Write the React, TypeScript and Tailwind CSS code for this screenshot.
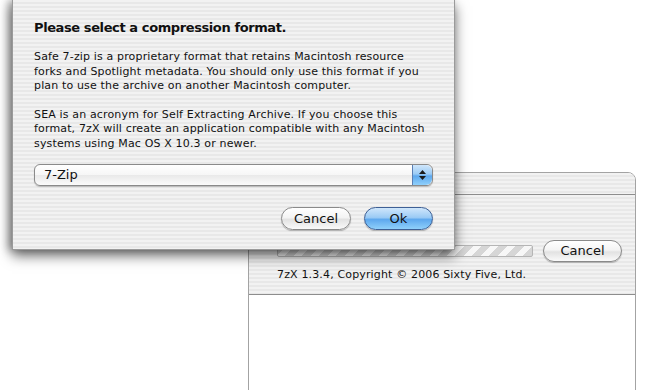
import React from "react";

const stripes =
  "bg-[repeating-linear-gradient(180deg,#f2f2f2_0px,#f2f2f2_2px,#e8e8e8_2px,#e8e8e8_4px)]";
const font = "font-['DejaVu_Sans',sans-serif]";

function AquaButton({ label, blue, className = "" }: { label: string; blue?: boolean; className?: string }) {
  return (
    <div
      className={
        "flex h-[22px] items-center justify-center rounded-full border text-[13px] text-[#111] shadow-[0_1px_1px_rgba(0,0,0,0.25)] " +
        (blue
          ? "border-[#3d5f95] bg-[linear-gradient(180deg,#cfe6fb_0%,#9bcbf5_45%,#5ea8ee_55%,#8fd0fb_100%)] "
          : "border-[#8a8a8a] bg-[linear-gradient(180deg,#ffffff_0%,#f4f4f4_45%,#e2e2e2_55%,#fafafa_100%)] ") +
        className
      }
    >
      {label}
    </div>
  );
}

function Stepper() {
  return (
    <div className="flex h-full w-[20px] flex-col items-center justify-center gap-[2px] rounded-r-[6px] border-l border-[#5a7fb5] bg-[linear-gradient(180deg,#cfe6fb_0%,#9bcbf5_45%,#5ea8ee_55%,#8fd0fb_100%)]">
      <svg width="7" height="4" viewBox="0 0 7 4"><path d="M3.5 0L7 4H0z" fill="#1a1a1a" /></svg>
      <svg width="7" height="4" viewBox="0 0 7 4"><path d="M0 0h7L3.5 4z" fill="#1a1a1a" /></svg>
    </div>
  );
}

function FormatSheet() {
  return (
    <div
      className={`absolute left-[12px] top-0 flex h-[250px] w-[443px] flex-col border-x border-b border-[#9a9a9a] px-[21px] pt-[20px] text-[#111] shadow-[0_6px_12px_rgba(0,0,0,0.55),-4px_0_8px_rgba(0,0,0,0.3)] ${stripes}`}
    >
      <h1 className="text-[13px] font-bold leading-[16px] tracking-[-0.4px]">Please select a compression format.</h1>
      <p className="mt-[14px] whitespace-nowrap text-[11px] leading-[14.5px] tracking-[0.15px]">
        Safe 7-zip is a proprietary format that retains Macintosh resource
        <br />
        forks and Spotlight metadata. You should only use this format if you
        <br />
        plan to use the archive on another Macintosh computer.
      </p>
      <p className="mt-[14px] whitespace-nowrap text-[11px] leading-[14.5px] tracking-[0.15px]">
        SEA is an acronym for Self Extracting Archive. If you choose this
        <br />
        format, 7zX will create an application compatible with any Macintosh
        <br />
        systems using Mac OS X 10.3 or newer.
      </p>
      <div className="mt-[13px] flex h-[22px] items-center rounded-[6px] border border-[#8a8a8a] bg-[linear-gradient(180deg,#ffffff_0%,#f6f6f6_50%,#e9e9e9_51%,#fbfbfb_100%)] shadow-[0_1px_1px_rgba(0,0,0,0.2)]">
        <span className="flex-1 pl-[9px] text-[13px]">7-Zip</span>
        <Stepper />
      </div>
      <div className="mt-[21px] flex justify-end gap-[13px]">
        <AquaButton label="Cancel" className="h-[23px] w-[70px]" />
        <AquaButton label="Ok" blue className="h-[23px] w-[69px]" />
      </div>
    </div>
  );
}

function ProgressWindow() {
  return (
    <div className="absolute left-[248px] top-[172px] flex h-[240px] w-[388px] flex-col overflow-hidden rounded-t-[8px] border border-[#a3a3a3] bg-white">
      <div className={`h-[22px] shrink-0 border-b border-[#8d8d8d] ${stripes}`} />
      <div className={`flex h-[100px] shrink-0 flex-col border-b border-[#8d8d8d] pl-[28px] pr-[13px] ${stripes}`}>
        <div className="mt-[45px] flex items-center">
          <div className="h-[12px] flex-1 rounded-[2px] border border-[#b5b5b5] bg-[repeating-linear-gradient(135deg,#d6d6d6_0px,#d6d6d6_6px,#f7f7f7_6px,#f7f7f7_12px)]" />
          <AquaButton label="Cancel" className="ml-[10px] h-[20px] w-[79px] text-[12px]" />
        </div>
        <div className="mt-[6px] text-[11px] leading-[14px] tracking-[0.15px] text-[#111]">
          7zX 1.3.4, Copyright © 2006 Sixty Five, Ltd.
        </div>
      </div>
      <div className="flex-1 bg-white" />
    </div>
  );
}

export default function App() {
  return (
    <div className={`relative h-[390px] w-[660px] overflow-hidden bg-white ${font}`}>
      <ProgressWindow />
      <FormatSheet />
    </div>
  );
}
